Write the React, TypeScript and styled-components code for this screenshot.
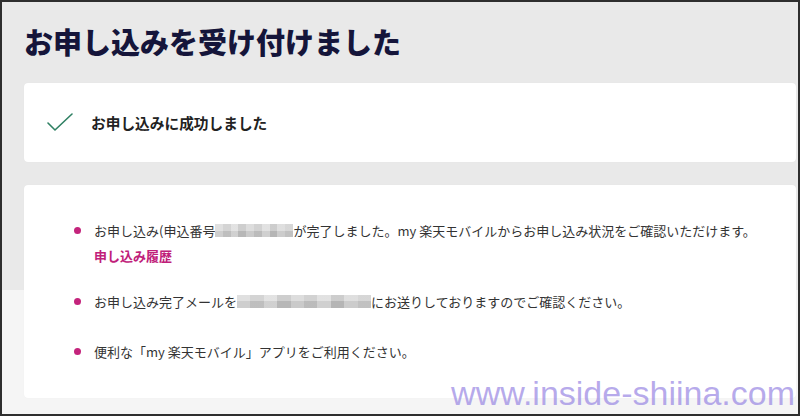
import React from "react";
import styled, { createGlobalStyle } from "styled-components";

const Global = createGlobalStyle`
  html, body { margin: 0; padding: 0; }
  body {
    width: 800px;
    height: 416px;
    overflow: hidden;
    font-family: "Noto Sans CJK JP", "Noto Sans", sans-serif;
  }
`;

const Frame = styled.div`
  position: relative;
  box-sizing: border-box;
  width: 800px;
  height: 416px;
  border: 2px solid #2e2e2e;
  background: linear-gradient(#e9e9e9 0 288px, #f5f5f5 288px);
  padding: 19px 2px 0 22px;
  display: flex;
  flex-direction: column;
  overflow: hidden;
`;

const Title = styled.h1`
  margin: 0;
  font-size: 29px;
  line-height: 40px;
  font-weight: 900;
  color: #15153a;
  letter-spacing: 0;
`;

const Card = styled.div<{ $top: number }>`
  margin-top: ${(p) => p.$top}px;
  background: #ffffff;
  border-radius: 4px;
  box-shadow: 0 0 1px rgba(0, 0, 0, 0.06);
`;

const StatusCard = styled(Card)`
  height: 79px;
  display: flex;
  align-items: center;
  gap: 17px;
  padding-left: 23px;
`;

const StatusText = styled.span`
  font-size: 14.7px;
  font-weight: 600;
  color: #222;
  line-height: 20px;
`;

const InfoCard = styled(Card)`
  padding: 33px 0 34px 50px;
`;

const List = styled.ul`
  margin: 0;
  padding: 0;
  list-style: none;
  display: flex;
  flex-direction: column;
  gap: 25px;
`;

const Item = styled.li`
  display: flex;
  align-items: flex-start;
  gap: 13px;
  font-size: 13px;
  line-height: 25px;
  color: #333;
`;

const Dot = styled.span`
  flex: none;
  width: 7px;
  height: 7px;
  border-radius: 50%;
  background: #c4247c;
  margin-top: 9px;
`;

const Body = styled.div`
  display: flex;
  flex-direction: column;
`;

const Line = styled.div`
  white-space: nowrap;
  display: flex;
  align-items: center;
`;

const Mask = styled.span<{ $w: number }>`
  display: inline-block;
  width: ${(p) => p.$w}px;
  height: 13px;
  background:
    linear-gradient(rgba(255,255,255,0.25) 0 50%, rgba(0,0,0,0.04) 50%),
    linear-gradient(
      90deg,
      #d6d6d6 0 10%,
      #c6c6c6 10% 20%,
      #d9d9d9 20% 30%,
      #bebebe 30% 40%,
      #d2d2d2 40% 50%,
      #c3c3c3 50% 60%,
      #d8d8d8 60% 70%,
      #bcbcbc 70% 80%,
      #d4d4d4 80% 90%,
      #c9c9c9 90% 100%
    );
`;

const Link = styled.a`
  display: block;
  margin-top: 5px;
  line-height: 16px;
  font-weight: 700;
  color: #c0207a;
  text-decoration: none;
  font-size: 13px;
`;

const Watermark = styled.div`
  position: absolute;
  right: 3px;
  bottom: 1px;
  font-family: "Liberation Sans", Arial, sans-serif;
  font-size: 34px;
  line-height: 40px;
  color: rgba(155, 138, 228, 0.72);
  letter-spacing: 0;
  pointer-events: none;
`;

const CheckIcon = () => (
  <svg width="27" height="20" viewBox="0 0 27 20" fill="none">
    <polyline
      points="1,10 8,17 25,1"
      stroke="#2f8063"
      strokeWidth="1.6"
      strokeLinecap="round"
      strokeLinejoin="round"
    />
  </svg>
);

export default function App() {
  return (
    <>
      <Global />
      <Frame>
        <Title>お申し込みを受け付けました</Title>
        <StatusCard $top={22}>
          <CheckIcon />
          <StatusText>お申し込みに成功しました</StatusText>
        </StatusCard>
        <InfoCard $top={23}>
          <List>
            <Item>
              <Dot />
              <Body>
                <Line>
                  お申し込み(申込番号
                  <Mask $w={78} />
                  が完了しました。my 楽天モバイルからお申し込み状況をご確認いただけます。
                </Line>
                <Link href="#">申し込み履歴</Link>
              </Body>
            </Item>
            <Item>
              <Dot />
              <Body>
                <Line>
                  お申し込み完了メールを
                  <Mask $w={134} />
                  にお送りしておりますのでご確認ください。
                </Line>
              </Body>
            </Item>
            <Item>
              <Dot />
              <Body>
                <Line>便利な「my 楽天モバイル」アプリをご利用ください。</Line>
              </Body>
            </Item>
          </List>
        </InfoCard>
        <Watermark>www.inside-shiina.com</Watermark>
      </Frame>
    </>
  );
}
